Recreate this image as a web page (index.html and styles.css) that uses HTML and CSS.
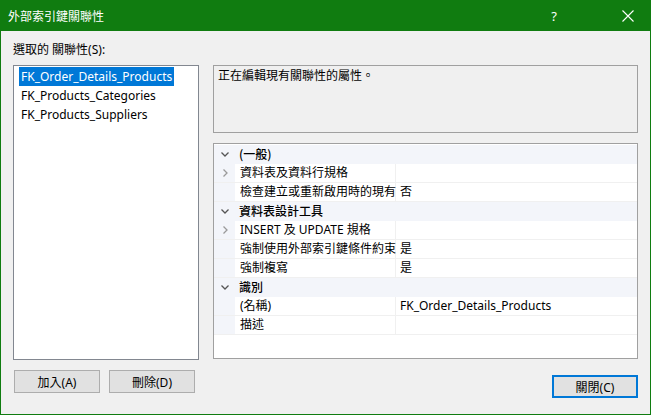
FILE: index.html
```html
<!DOCTYPE html>
<html lang="zh-Hant">
<head>
<meta charset="utf-8">
<title>外部索引鍵關聯性</title>
<link rel="stylesheet" href="styles.css">
</head>
<body>
<div class="window">
  <div class="titlebar">
    <span class="title">外部索引鍵關聯性</span>
    <span class="tb-help">?</span>
    <span class="tb-close">
      <svg width="12" height="12" viewBox="0 0 12 12"><path d="M0.5 0.5L11.5 11.5M11.5 0.5L0.5 11.5" stroke="#fff" stroke-width="1.1" fill="none"/></svg>
    </span>
  </div>
  <div class="content">
    <div class="label">選取的 關聯性(S):</div>
    <div class="main">
      <div class="listbox">
        <div class="item"><span class="sel">FK_Order_Details_Products</span></div>
        <div class="item"><span>FK_Products_Categories</span></div>
        <div class="item"><span>FK_Products_Suppliers</span></div>
      </div>
      <div class="right">
        <div class="desc">正在編輯現有關聯性的屬性。</div>
        <div class="grid">
          <div class="row cat">
            <span class="gut"><svg width="8" height="5" viewBox="0 0 8 5"><path d="M0.5 0.5L4 4L7.5 0.5" stroke="#555" stroke-width="1.3" fill="none"/></svg></span>
            <span class="catname">(一般)</span>
          </div>
          <div class="row prop">
            <span class="gut"><svg width="5" height="8" viewBox="0 0 5 8"><path d="M0.5 0.5L4 4L0.5 7.5" stroke="#9a9a9a" stroke-width="1.3" fill="none"/></svg></span>
            <span class="name">資料表及資料行規格</span><span class="val"></span>
          </div>
          <div class="row prop">
            <span class="gut"></span>
            <span class="name">檢查建立或重新啟用時的現有</span><span class="val">否</span>
          </div>
          <div class="row cat">
            <span class="gut"><svg width="8" height="5" viewBox="0 0 8 5"><path d="M0.5 0.5L4 4L7.5 0.5" stroke="#555" stroke-width="1.3" fill="none"/></svg></span>
            <span class="catname">資料表設計工具</span>
          </div>
          <div class="row prop">
            <span class="gut"><svg width="5" height="8" viewBox="0 0 5 8"><path d="M0.5 0.5L4 4L0.5 7.5" stroke="#9a9a9a" stroke-width="1.3" fill="none"/></svg></span>
            <span class="name">INSERT 及 UPDATE 規格</span><span class="val"></span>
          </div>
          <div class="row prop">
            <span class="gut"></span>
            <span class="name">強制使用外部索引鍵條件約束</span><span class="val">是</span>
          </div>
          <div class="row prop">
            <span class="gut"></span>
            <span class="name">強制複寫</span><span class="val">是</span>
          </div>
          <div class="row cat">
            <span class="gut"><svg width="8" height="5" viewBox="0 0 8 5"><path d="M0.5 0.5L4 4L7.5 0.5" stroke="#555" stroke-width="1.3" fill="none"/></svg></span>
            <span class="catname">識別</span>
          </div>
          <div class="row prop">
            <span class="gut"></span>
            <span class="name">(名稱)</span><span class="val">FK_Order_Details_Products</span>
          </div>
          <div class="row prop">
            <span class="gut"></span>
            <span class="name">描述</span><span class="val"></span>
          </div>
        </div>
      </div>
    </div>
    <div class="footer">
      <div class="left-buttons">
        <button class="btn">加入(A)</button>
        <button class="btn">刪除(D)</button>
      </div>
      <button class="btn default">關閉(C)</button>
    </div>
  </div>
</div>
</body>
</html>
```
FILE: styles.css
```css
* { box-sizing: border-box; }
html, body { margin: 0; padding: 0; }
body {
  font-family: "Noto Sans", "Noto Sans CJK TC", sans-serif;
  font-size: 12px;
  color: #000;
  background: #f0f0f0;
}
.window {
  width: 651px;
  height: 415px;
  border: 1px solid #107c10;
  border-top: none;
  background: #f0f0f0;
  display: flex;
  flex-direction: column;
}
.titlebar {
  height: 31px;
  margin: 0 -1px;
  background: #107c10;
  color: #fff;
  display: flex;
  align-items: center;
  font-size: 12px;
}
.title {
  padding-left: 8px;
  flex: 1;
  font-family: "Noto Sans CJK TC", sans-serif;
}
.tb-help {
  width: 12px;
  margin-right: 62px;
  font-size: 13px;
  text-align: center;
}
.tb-close {
  width: 12px;
  height: 12px;
  margin-right: 17px;
  display: flex;
}
.content {
  flex: 1;
  padding: 11px 12px 0 12px;
  display: flex;
  flex-direction: column;
}
.label {
  height: 16px;
  line-height: 16px;
  margin-bottom: 7px;
}
.main {
  display: flex;
  gap: 14px;
  height: 295px;
}
.listbox {
  width: 186px;
  background: #fff;
  border: 1px solid #828790;
  padding: 1px 5px;
}
.item {
  height: 19px;
  line-height: 19px;
}
.item span {
  padding: 0 2px;
  display: inline-block;
}
.item .sel {
  background: #0078d7;
  color: #fff;
}
.right {
  flex: 1;
  display: flex;
  flex-direction: column;
  gap: 10px;
}
.desc {
  height: 68px;
  border: 1px solid #a0a0a0;
  padding: 1px 4px;
  line-height: 16px;
  font-family: "Noto Sans CJK TC", sans-serif;
}
.grid {
  height: 216px;
  background: #fff;
  border: 1px solid #a0a0a0;
  padding-top: 1px;
}
.row {
  display: flex;
  height: 19px;
  line-height: 18px;
  border-bottom: 1px solid #f0f0f0;
  background: #fff;
}
.row.cat {
  background: #f3f5fa;
  border-bottom-color: #f3f5fa;
}
.gut {
  width: 21px;
  flex: none;
  background: #f3f5fa;
  display: flex;
  align-items: center;
  justify-content: center;
}
.cat .gut { justify-content: flex-start; padding-left: 7px; }
.prop .gut { justify-content: flex-start; padding-left: 9px; }
.catname {
  padding-left: 4px;
  font-weight: 500;
  font-family: "Noto Sans CJK TC", sans-serif;
}
.name {
  width: 161px;
  flex: none;
  padding-left: 5px;
  white-space: nowrap;
  border-right: 1px solid #f0f0f0;
}
.val {
  flex: 1;
  padding-left: 4px;
  white-space: nowrap;
}
.footer {
  display: flex;
  justify-content: space-between;
  align-items: flex-start;
  margin-top: 10px;
}
.left-buttons {
  display: flex;
  gap: 9px;
  padding-left: 1px;
}
.btn {
  width: 86px;
  height: 23px;
  background: #e1e1e1;
  border: 1px solid #adadad;
  font-family: "Noto Sans", "Noto Sans CJK TC", sans-serif;
  font-size: 12px;
  color: #000;
  padding: 0;
  margin: 0;
}
.btn.default {
  border: 2px solid #0078d7;
  margin-top: 5px;
}
```
